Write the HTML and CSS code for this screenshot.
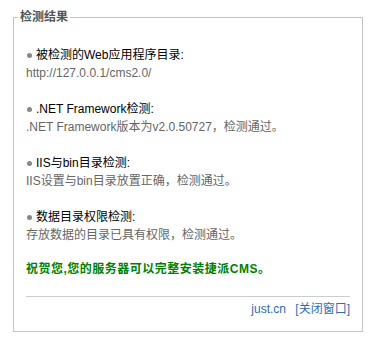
FILE: index.html
```html
<!DOCTYPE html>
<html lang="zh-CN">
<head>
    <meta charset="UTF-8">
    <meta name="viewport" content="width=device-width, initial-scale=1.0">
    <title>检测结果</title>
    <link rel="stylesheet" href="styles.css">
</head>
<body>
    <div class="wrap">
        <fieldset class="result">
            <legend>检测结果</legend>

            <div class="item">
                <p class="item-title"><span class="dot"></span>被检测的Web应用程序目录:</p>
                <p class="item-text">http://127.0.0.1/cms2.0/</p>
            </div>
            <div class="item">
                <p class="item-title"><span class="dot"></span>.NET Framework检测:</p>
                <p class="item-text">.NET Framework版本为v2.0.50727，检测通过。</p>
            </div>
            <div class="item">
                <p class="item-title"><span class="dot"></span>IIS与bin目录检测:</p>
                <p class="item-text">IIS设置与bin目录放置正确，检测通过。</p>
            </div>
            <div class="item">
                <p class="item-title"><span class="dot"></span>数据目录权限检测:</p>
                <p class="item-text">存放数据的目录已具有权限，检测通过。</p>
            </div>

            <p class="success">祝贺您,您的服务器可以完整安装捷派CMS。</p>

            <div class="footer">
                <a href="#">just.cn</a>
                <a href="#">[关闭窗口]</a>
            </div>
        </fieldset>
    </div>
</body>
</html>
```

FILE: styles.css
```css
body {
    margin: 0;
    padding: 0;
    background: #fff;
    font-family: "Liberation Sans", "Noto Sans CJK SC", sans-serif;
    font-size: 12px;
    line-height: 18px;
}
p {
    margin: 0;
}
.wrap {
    padding: 8px 0 0 13px;
}
.result {
    box-sizing: border-box;
    width: 350px;
    margin: 0;
    padding: 20px 12px 13px;
    border: 1px solid #c4c4c4;
}
.result legend {
    margin-left: -8px;
    padding: 0 2px;
    font-weight: bold;
    color: #555;
}
.item {
    margin-bottom: 18px;
}
.item-title {
    color: #000;
}
.dot {
    display: inline-block;
    width: 5px;
    height: 5px;
    margin: 0 4px 0 1px;
    border-radius: 50%;
    background: #888;
    vertical-align: 1px;
}
.item-text {
    color: #666;
}
.success {
    margin-top: -2px;
    font-weight: bold;
    letter-spacing: 0.5px;
    color: #008000;
}
.footer {
    margin-top: 18px;
    padding-top: 3px;
    border-top: 1px solid #ccc;
    text-align: right;
}
.footer a {
    margin-left: 6px;
    color: #2f6db5;
    text-decoration: none;
}
```
